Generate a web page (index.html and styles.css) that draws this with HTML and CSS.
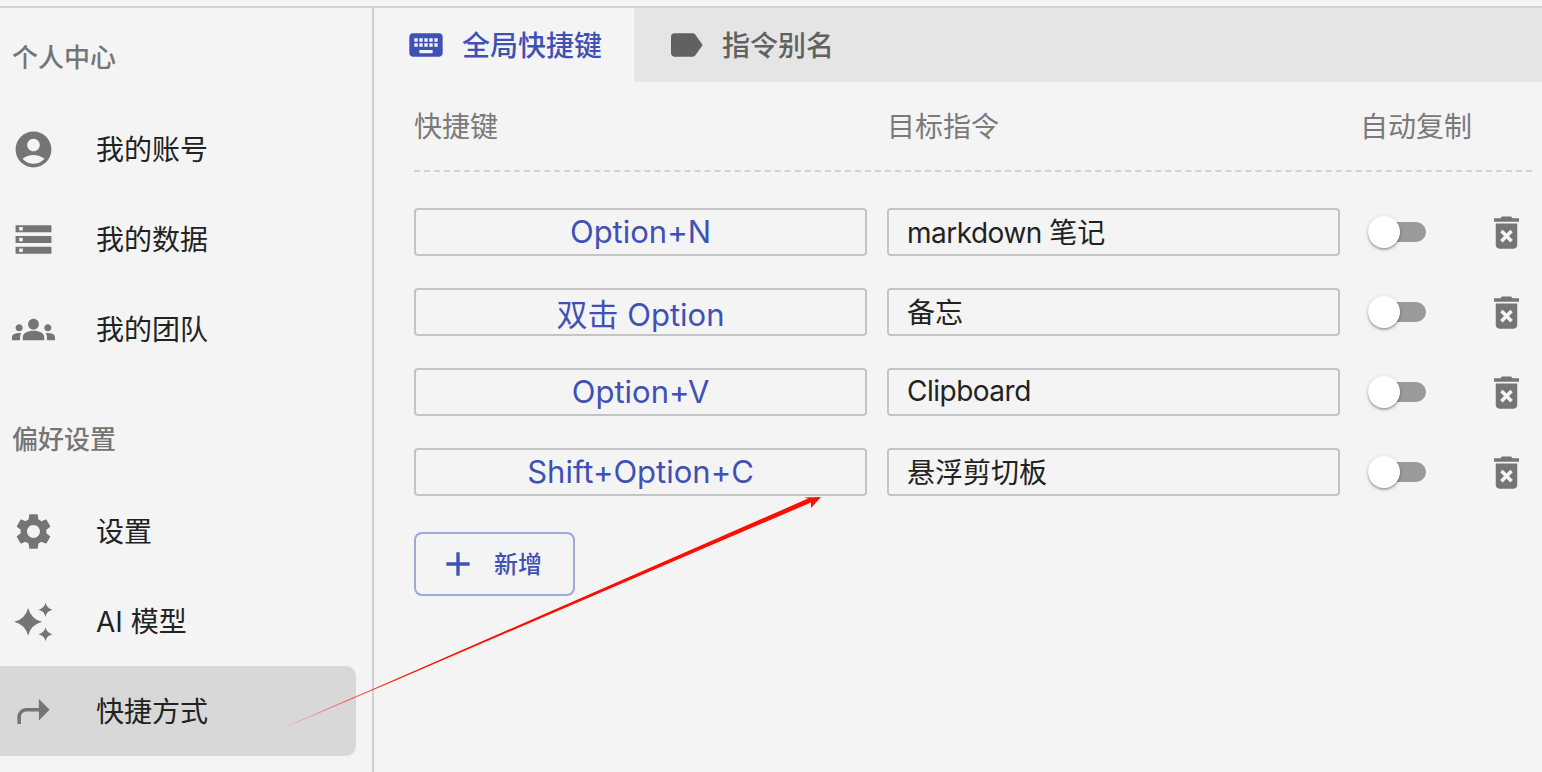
FILE: index.html
```html
<!DOCTYPE html>
<html lang="zh-CN">
<head>
<meta charset="utf-8">
<title>快捷方式</title>
<link rel="stylesheet" href="styles.css">
</head>
<body>
<div class="topline"></div>
<div class="app">
  <aside class="sidebar">
    <div class="section-title">个人中心</div>
    <a class="nav-item"><svg class="nav-icon" viewBox="0 0 24 24"><path d="M12 2C6.48 2 2 6.48 2 12s4.48 10 10 10 10-4.48 10-10S17.52 2 12 2zm0 4c1.93 0 3.5 1.57 3.5 3.5S13.93 13 12 13s-3.5-1.57-3.5-3.5S10.07 6 12 6zm0 14c-2.03 0-4.43-.82-6.14-2.88C7.55 15.8 9.68 15 12 15s4.45.8 6.14 2.12C16.43 19.18 14.03 20 12 20z"/></svg><span>我的账号</span></a>
    <a class="nav-item"><svg class="nav-icon" viewBox="0 0 24 24"><path d="M2 20h20v-4H2v4zm2-3h2v2H4v-2zM2 4v4h20V4H2zm4 3H4V5h2v2zm-4 7h20v-4H2v4zm2-3h2v2H4v-2z"/></svg><span>我的数据</span></a>
    <a class="nav-item"><svg class="nav-icon" viewBox="0 0 24 24"><path d="M12 12.75c1.63 0 3.07.39 4.24.9 1.08.48 1.76 1.56 1.76 2.73V18H6v-1.61c0-1.18.68-2.26 1.76-2.73 1.17-.52 2.61-.91 4.24-.91zM4 13c1.1 0 2-.9 2-2s-.9-2-2-2-2 .9-2 2 .9 2 2 2zm1.13 1.1c-.37-.06-.74-.1-1.13-.1-.99 0-1.93.21-2.78.58C.48 14.9 0 15.62 0 16.43V18h4.5v-1.61c0-.83.23-1.61.63-2.29zM20 13c1.1 0 2-.9 2-2s-.9-2-2-2-2 .9-2 2 .9 2 2 2zm4 3.43c0-.81-.48-1.53-1.22-1.85-.85-.37-1.79-.58-2.78-.58-.39 0-.76.04-1.13.1.4.68.63 1.46.63 2.29V18H24v-1.57zM12 6c1.66 0 3 1.34 3 3s-1.34 3-3 3-3-1.34-3-3 1.34-3 3-3z"/></svg><span>我的团队</span></a>
    <div class="section-title section-gap">偏好设置</div>
    <a class="nav-item"><svg class="nav-icon" viewBox="0 0 24 24"><path d="M19.14 12.94c.04-.3.06-.61.06-.94 0-.32-.02-.64-.07-.94l2.03-1.58c.18-.14.23-.41.12-.61l-1.92-3.32c-.12-.22-.37-.29-.59-.22l-2.39.96c-.5-.38-1.03-.7-1.62-.94l-.36-2.54c-.04-.24-.24-.41-.48-.41h-3.84c-.24 0-.43.17-.47.41l-.36 2.54c-.59.24-1.13.57-1.62.94l-2.39-.96c-.22-.08-.47 0-.59.22L2.74 8.87c-.12.21-.08.47.12.61l2.03 1.58c-.05.3-.09.63-.09.94s.02.64.07.94l-2.03 1.58c-.18.14-.23.41-.12.61l1.92 3.32c.12.22.37.29.59.22l2.39-.96c.5.38 1.03.7 1.62.94l.36 2.54c.05.24.24.41.48.41h3.84c.24 0 .44-.17.47-.41l.36-2.54c.59-.24 1.13-.56 1.62-.94l2.39.96c.22.08.47 0 .59-.22l1.92-3.32c.12-.22.07-.47-.12-.61l-2.01-1.58zM12 15.6c-1.98 0-3.6-1.62-3.6-3.6s1.62-3.6 3.6-3.6 3.6 1.62 3.6 3.6-1.62 3.6-3.6 3.6z"/></svg><span>设置</span></a>
    <a class="nav-item"><svg class="nav-icon" viewBox="0 0 24 24"><path d="M9 4.4Q10.6 10.6 16.8 12.2 10.6 13.8 9 20 7.4 13.8 1.2 12.2 7.4 10.6 9 4.4zM18.7 1.6Q19.4 4.8 22.6 5.5 19.4 6.2 18.7 9.4 18 6.2 14.8 5.5 18 4.8 18.7 1.6zM18.7 15.4Q19.4 18.4 22.6 19.1 19.4 19.8 18.7 23 18 19.8 14.8 19.1 18 18.4 18.7 15.4z"/></svg><span>AI 模型</span></a>
    <a class="nav-item active"><svg class="nav-icon" viewBox="0 0 24 24"><path d="M21 11l-6-6v5H8c-2.76 0-5 2.24-5 5v4h2v-4c0-1.65 1.35-3 3-3h7v5l6-6z"/></svg><span>快捷方式</span></a>
  </aside>
  <main class="main">
    <nav class="tabs">
      <div class="tab tab-active"><svg class="tab-icon" viewBox="0 0 24 24"><path d="M20 5H4c-1.1 0-1.99.9-1.99 2L2 17c0 1.1.9 2 2 2h16c1.1 0 2-.9 2-2V7c0-1.1-.9-2-2-2zm-9 3h2v2h-2V8zm0 3h2v2h-2v-2zM8 8h2v2H8V8zm0 3h2v2H8v-2zm-1 2H5v-2h2v2zm0-3H5V8h2v2zm9 7H8v-2h8v2zm0-4h-2v-2h2v2zm0-3h-2V8h2v2zm3 3h-2v-2h2v2zm0-3h-2V8h2v2z"/></svg><span>全局快捷键</span></div>
      <div class="tab"><svg class="tab-icon" viewBox="0 0 24 24"><path d="M17.63 5.84C17.27 5.33 16.67 5 16 5L5 5.01C3.9 5.01 3 5.9 3 7v10c0 1.1.9 1.99 2 1.99L16 19c.67 0 1.27-.33 1.63-.84L22 12l-4.37-6.16z"/></svg><span>指令别名</span></div>
      <div class="tab-rest"></div>
    </nav>
    <section class="panel">
      <div class="grid head">
        <div>快捷键</div>
        <div>目标指令</div>
        <div>自动复制</div>
      </div>
      <div class="grid row">
        <div class="field key">Option+N</div>
        <div class="field target"><span><span class="latin">markdown </span>笔记</span></div>
        <div class="actions"><span class="switch"><span class="thumb"></span></span><svg class="trash" viewBox="0 0 24 24"><path d="M6 19c0 1.1.9 2 2 2h8c1.1 0 2-.9 2-2V7H6v12zm2.46-7.12l1.41-1.41L12 12.59l2.12-2.12 1.41 1.41L13.41 14l2.12 2.12-1.41 1.41L12 15.41l-2.12 2.12-1.41-1.41L10.59 14l-2.13-2.12zM15.5 4l-1-1h-5l-1 1H5v2h14V4z"/></svg></div>
      </div>
      <div class="grid row">
        <div class="field key key-cjk">双击 Option</div>
        <div class="field target">备忘</div>
        <div class="actions"><span class="switch"><span class="thumb"></span></span><svg class="trash" viewBox="0 0 24 24"><path d="M6 19c0 1.1.9 2 2 2h8c1.1 0 2-.9 2-2V7H6v12zm2.46-7.12l1.41-1.41L12 12.59l2.12-2.12 1.41 1.41L13.41 14l2.12 2.12-1.41 1.41L12 15.41l-2.12 2.12-1.41-1.41L10.59 14l-2.13-2.12zM15.5 4l-1-1h-5l-1 1H5v2h14V4z"/></svg></div>
      </div>
      <div class="grid row">
        <div class="field key">Option+V</div>
        <div class="field target"><span class="latin">Clipboard</span></div>
        <div class="actions"><span class="switch"><span class="thumb"></span></span><svg class="trash" viewBox="0 0 24 24"><path d="M6 19c0 1.1.9 2 2 2h8c1.1 0 2-.9 2-2V7H6v12zm2.46-7.12l1.41-1.41L12 12.59l2.12-2.12 1.41 1.41L13.41 14l2.12 2.12-1.41 1.41L12 15.41l-2.12 2.12-1.41-1.41L10.59 14l-2.13-2.12zM15.5 4l-1-1h-5l-1 1H5v2h14V4z"/></svg></div>
      </div>
      <div class="grid row">
        <div class="field key">Shift+Option+C</div>
        <div class="field target">悬浮剪切板</div>
        <div class="actions"><span class="switch"><span class="thumb"></span></span><svg class="trash" viewBox="0 0 24 24"><path d="M6 19c0 1.1.9 2 2 2h8c1.1 0 2-.9 2-2V7H6v12zm2.46-7.12l1.41-1.41L12 12.59l2.12-2.12 1.41 1.41L13.41 14l2.12 2.12-1.41 1.41L12 15.41l-2.12 2.12-1.41-1.41L10.59 14l-2.13-2.12zM15.5 4l-1-1h-5l-1 1H5v2h14V4z"/></svg></div>
      </div>
      <button class="add"><svg class="add-icon" viewBox="0 0 24 24"><path d="M19 13h-6v6h-2v-6H5v-2h6V5h2v6h6v2z"/></svg><span>新增</span></button>
    </section>
  </main>
</div>
<svg class="arrow" viewBox="0 0 1542 772">
  <defs>
    <linearGradient id="fade" gradientUnits="userSpaceOnUse" x1="288" y1="726" x2="400" y2="678">
      <stop offset="0" stop-color="#ff0d00" stop-opacity="0.12"/>
      <stop offset="1" stop-color="#ff0d00"/>
    </linearGradient>
  </defs>
  <polygon fill="url(#fade)" points="288,725.6 400,677.2 400,678.4 288,726.4"/>
  <polygon fill="#ff0d00" points="400,677.2 808,498.6 804,497.5 821,497 811,508 811,502.5 400,678.4"/>
</svg>
</body>
</html>
```
FILE: styles.css
```css
* { box-sizing: border-box; }
html, body { margin: 0; height: 100%; }
body {
  width: 1542px;
  height: 772px;
  overflow: hidden;
  position: relative;
  background: #f4f4f4;
  color: #222;
  font-family: Inter, "Noto Sans CJK SC", sans-serif;
}
.topline { height: 8px; border-bottom: 2px solid #d2d2d2; }
.app { display: flex; height: 764px; }
.sidebar {
  width: 374px;
  flex: none;
  padding-right: 16px;
  border-right: 2px solid #d0d0d0;
}
.section-title {
  height: 96px;
  padding: 32px 0 0 12px;
  font-size: 26px;
  font-weight: 500;
  line-height: 36px;
  color: #757575;
}
.section-gap { margin-top: 16px; }
.nav-item {
  display: flex;
  align-items: center;
  gap: 41px;
  height: 90px;
  padding-left: 12px;
  font-size: 28px;
  color: #222;
}
.nav-item span { padding-bottom: 2px; }
.nav-item.active { background: #d8d8d8; border-radius: 0 10px 10px 0; }
.nav-icon { width: 43px; height: 43px; flex: none; fill: #757575; }
.main { flex: 1; min-width: 0; }
.tabs { display: flex; height: 74px; }
.tab {
  display: flex;
  align-items: center;
  gap: 16px;
  padding: 0 32px;
  font-size: 28px;
  font-weight: 500;
  background: #e5e5e5;
  color: #616161;
}
.tab span { padding-bottom: 2px; }
.tab-active { background: #f4f4f4; color: #3f51b5; }
.tab-icon { width: 40px; height: 40px; flex: none; fill: currentColor; }
.tab-rest { flex: 1; background: #e5e5e5; }
.panel { padding-left: 40px; padding-right: 10px; }
.grid { display: grid; grid-template-columns: 453px 453px 172px; column-gap: 20px; }
.head {
  height: 90px;
  padding-top: 24px;
  font-size: 28px;
  line-height: 42px;
  color: #7a7a7a;
  border-bottom: 2px dashed #d2d2d2;
  margin-bottom: 36px;
}
.row { height: 48px; margin-bottom: 32px; }
.field {
  display: flex;
  align-items: center;
  height: 48px;
  border: 2px solid #c4c4c4;
  border-radius: 4px;
}
.key { justify-content: center; padding-bottom: 2px; font-size: 31px; color: #3f51b5; }
.key-cjk { padding-bottom: 0; }
.target { padding: 0 0 2px 18px; font-size: 28px; color: #222; }
.latin { letter-spacing: -0.5px; white-space: pre; }
.actions { display: flex; align-items: center; justify-content: space-between; padding: 0 4px 0 8px; }
.switch { display: block; width: 58px; height: 20px; border-radius: 10px; background: #9a9a9a; position: relative; }
.thumb {
  position: absolute;
  left: 0;
  top: -6px;
  width: 32px;
  height: 32px;
  border-radius: 50%;
  background: #fff;
  box-shadow: 0 2px 2px rgba(0,0,0,.25), 0 1px 4px rgba(0,0,0,.15);
}
.trash { width: 43px; height: 43px; fill: #757575; }
.add {
  display: flex;
  align-items: center;
  gap: 16px;
  width: 161px;
  height: 64px;
  margin-top: 36px;
  padding: 0 0 0 22px;
  background: transparent;
  border: 2px solid #9fa8da;
  border-radius: 8px;
  color: #3f51b5;
  font-family: inherit;
  font-size: 24px;
  font-weight: 500;
}
.add span { padding-bottom: 4px; }
.add-icon { width: 40px; height: 40px; flex: none; fill: currentColor; }
.arrow { position: absolute; left: 0; top: 0; width: 1542px; height: 772px; pointer-events: none; }
```
